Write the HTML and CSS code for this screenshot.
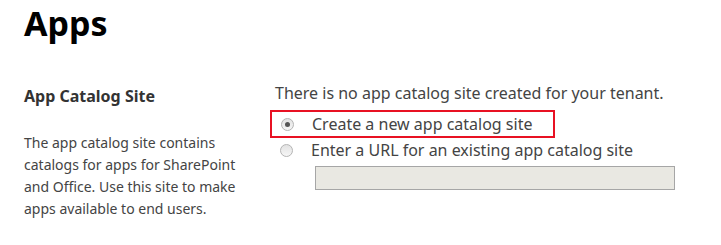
FILE: index.html
```html
<!DOCTYPE html>
<html lang="en">

<head>
    <meta charset="UTF-8">
    <meta name="viewport" content="width=device-width, initial-scale=1.0">
    <title>Apps</title>
    <link rel="stylesheet" href="styles.css">
</head>

<body>
    <h1 class="page-title">Apps</h1>

    <div class="section">
        <div class="side">
            <h2>App Catalog Site</h2>
            <p>The app catalog site contains catalogs for apps for SharePoint and Office. Use this site to make apps available to end users.</p>
        </div>

        <div class="main">
            <p class="notice">There is no app catalog site created for your tenant.</p>
            <div class="option highlighted">
                <span class="radio checked"></span>
                <label>Create a new app catalog site</label>
            </div>
            <div class="option">
                <span class="radio"></span>
                <label>Enter a URL for an existing app catalog site</label>
            </div>
            <div class="url-field"></div>
        </div>
    </div>
</body>

</html>
```

FILE: styles.css
```css
* {
    margin: 0;
    padding: 0;
    box-sizing: border-box;
    font-family: "Noto Sans", "Open Sans", Arial, sans-serif;
}

body {
    background: white;
    padding: 0 24px;
    color: #444;
}

.page-title {
    font-size: 34px;
    font-weight: bold;
    color: #000;
    line-height: 46px;
}

.section {
    display: flex;
    margin-top: 36px;
}

.side {
    width: 246px;
}

.side h2 {
    font-size: 16px;
    font-weight: bold;
    color: #333;
    line-height: 22px;
    margin-top: 3px;
    margin-bottom: 25px;
}

.side p {
    font-size: 14px;
    line-height: 22px;
    width: 226px;
}

.notice {
    font-size: 16px;
    line-height: 22px;
    margin-left: 5px;
}

.option {
    display: flex;
    align-items: center;
    height: 24px;
    font-size: 16px;
}

.highlighted {
    height: 28px;
    border: 2px solid #e81123;
    width: 285px;
    margin-top: 6px;
}

.option .radio {
    width: 13px;
    height: 13px;
    border-radius: 50%;
    border: 1px solid #b4b4b4;
    background: linear-gradient(#e2e2e2, #f6f6f6);
    margin-left: 10px;
    margin-right: 18px;
    position: relative;
}

.highlighted .radio {
    margin-left: 9px;
}

.radio.checked::after {
    content: "";
    position: absolute;
    left: 3px;
    top: 3px;
    width: 5px;
    height: 5px;
    border-radius: 50%;
    background: #555;
}

.url-field {
    margin-left: 45px;
    margin-top: 4px;
    width: 360px;
    height: 24px;
    border: 1px solid #a6a6a6;
    background: #e9e8e2;
}
```
